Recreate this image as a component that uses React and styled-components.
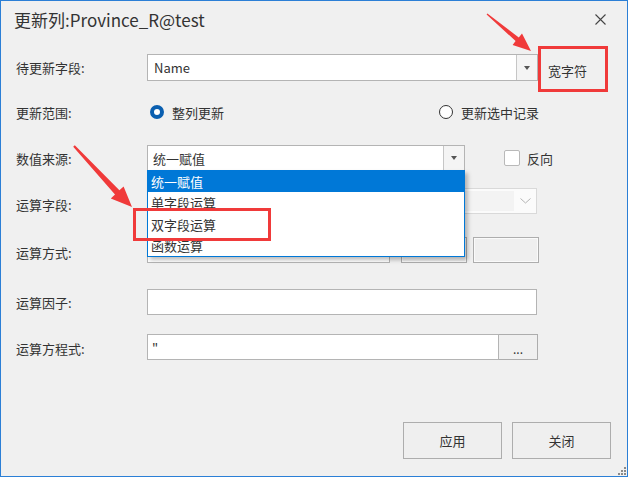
import styled, { createGlobalStyle } from "styled-components";

const GlobalStyle = createGlobalStyle`
	html, body {
		margin: 0;
		padding: 0;
		background: #f0f0f0;
	}
	* {
		box-sizing: border-box;
	}
`;

const Window = styled.div`
	position: relative;
	display: flex;
	flex-direction: column;
	width: 628px;
	height: 477px;
	background: #f0f0f0;
	border: 1px solid #2b7fd6;
	font-family: "Noto Sans CJK SC", "Noto Sans", sans-serif;
	font-size: 13px;
	color: #333;
	overflow: hidden;
`;

const TitleBar = styled.div`
	display: flex;
	align-items: center;
	justify-content: space-between;
	height: 36px;
	padding: 0 21px 0 13px;
`;

const Title = styled.div`
	font-size: 17px;
	color: #333;
`;

const Body = styled.div`
	display: flex;
	flex-direction: column;
	padding-left: 15px;
	flex: 1;
`;

const Row = styled.div`
	display: grid;
	grid-template-columns: 131px 1fr;
	align-items: center;
	height: ${(p) => p.$h}px;
	margin-top: ${(p) => p.$mt}px;
`;

const Label = styled.div`
	padding-top: ${(p) => p.$dy || 0}px;
	white-space: nowrap;
`;

const Controls = styled.div`
	display: flex;
	align-items: center;
	height: 100%;
`;

const Combo = styled.div`
	position: relative;
	display: flex;
	width: ${(p) => p.$w}px;
	height: 100%;
	background: #fff;
	border: 1px solid #b4b4b4;
`;

const ComboText = styled.div`
	flex: 1;
	display: flex;
	align-items: center;
	padding-left: ${(p) => p.$pl || 5}px;
	white-space: nowrap;
`;

const DropBtn = styled.div`
	display: flex;
	align-items: center;
	justify-content: center;
	width: 21px;
	border-left: 1px solid #c6c6c6;
	background: #f4f4f4;
`;

const Caret = styled.div`
	width: 0;
	height: 0;
	border-left: 3.5px solid transparent;
	border-right: 3.5px solid transparent;
	border-top: 4px solid #555;
`;

const DisabledCombo = styled.div`
	display: flex;
	width: ${(p) => p.$w}px;
	height: 100%;
	background: #fbfbfb;
	border: 1px solid #d9d9d9;
`;

const DisabledField = styled.div`
	flex: 1;
	margin: 2px 0 2px 2px;
	background: #f3f3f3;
`;

const ChevronBox = styled.div`
	display: flex;
	align-items: center;
	justify-content: center;
	width: 22px;
`;

const WideText = styled.div`
	margin-left: 10px;
	padding-top: 5px;
`;

const Option = styled.div`
	display: flex;
	align-items: center;
	width: ${(p) => (p.$w ? `${p.$w}px` : "auto")};
`;

const Radio = styled.span`
	display: inline-block;
	width: 14px;
	height: 14px;
	margin-left: 3px;
	margin-right: 8px;
	border-radius: 50%;
	background: #fff;
	border: ${(p) => (p.$on ? "4px solid #0a5fb0" : "1px solid #333")};
`;

const Check = styled.span`
	display: inline-block;
	width: 16px;
	height: 16px;
	margin-left: 39px;
	margin-right: 7px;
	border: 1px solid #b9b9b9;
	border-radius: 2px;
	background: #fff;
`;

const DropList = styled.div`
	position: absolute;
	top: 100%;
	left: -1px;
	right: -1px;
	height: 87px;
	background: #fff;
	border: 1px solid #0078d7;
	box-shadow: 3px 3px 4px rgba(0, 0, 0, 0.25);
	z-index: 2;
`;

const DropItem = styled.div`
	height: 21.3px;
	line-height: 21px;
	padding-left: 3px;
	background: ${(p) => (p.$active ? "#0078d7" : "transparent")};
	color: ${(p) => (p.$active ? "#fff" : "#333")};
`;

const Field = styled.div`
	display: flex;
	align-items: center;
	width: ${(p) => p.$w}px;
	height: 100%;
	padding-left: 4px;
	background: #fff;
	border: 1px solid #b4b4b4;
`;

const SideBox = styled.div`
	width: 66px;
	height: 100%;
	margin-left: ${(p) => p.$ml}px;
	border: 1px solid #adadad;
	box-shadow: inset 0 0 0 1px #fafafa;
	background: #efefef;
`;

const Ellipsis = styled.div`
	display: flex;
	align-items: flex-end;
	justify-content: center;
	width: 39px;
	height: 100%;
	padding-bottom: 4px;
	border: 1px solid #adadad;
	border-left: none;
	background: #f0f0f0;
	font-size: 12px;
	line-height: 1;
`;

const Footer = styled.div`
	display: flex;
	justify-content: flex-end;
	gap: 10px;
	padding: 0 16px 17px 0;
`;

const Button = styled.div`
	display: flex;
	align-items: center;
	justify-content: center;
	width: 99px;
	height: 37px;
	border: 1px solid #adadad;
	background: #efefef;
`;

const Overlay = styled.svg`
	position: absolute;
	left: -1px;
	top: -1px;
	pointer-events: none;
	z-index: 5;
`;

const Grip = styled.svg`
	position: absolute;
	right: 1px;
	bottom: 1px;
`;

const CloseIcon = () => (
	<svg width="11" height="11" viewBox="0 0 11 11">
		<path d="M0.5 0.5 L10.5 10.5 M10.5 0.5 L0.5 10.5" stroke="#444" strokeWidth="1.1" />
	</svg>
);

const Chevron = () => (
	<svg width="11" height="6" viewBox="0 0 11 6">
		<path d="M0.5 0.5 L5.5 5 L10.5 0.5" fill="none" stroke="#b5b5b5" strokeWidth="1" />
	</svg>
);

const items = ["统一赋值", "单字段运算", "双字段运算", "函数运算"];

const App = () => {
	return (
		<>
			<GlobalStyle />
			<Window>
				<TitleBar>
					<Title>更新列:Province_R@test</Title>
					<CloseIcon />
				</TitleBar>

				<Body>
					<Row $mt={17} $h={27}>
						<Label>待更新字段:</Label>
						<Controls>
							<Combo $w={391}>
								<ComboText $pl={6}>Name</ComboText>
								<DropBtn>
									<Caret />
								</DropBtn>
							</Combo>
							<WideText>宽字符</WideText>
						</Controls>
					</Row>

					<Row $mt={20} $h={22}>
						<Label>更新范围:</Label>
						<Controls>
							<Option $w={289}>
								<Radio $on />
								整列更新
							</Option>
							<Option>
								<Radio />
								更新选中记录
							</Option>
						</Controls>
					</Row>

					<Row $mt={22} $h={26}>
						<Label>数值来源:</Label>
						<Controls>
							<Combo $w={318}>
								<ComboText>统一赋值</ComboText>
								<DropBtn>
									<Caret />
								</DropBtn>
								<DropList>
									{items.map((t, i) => (
										<DropItem key={t} $active={i === 0}>
											{t}
										</DropItem>
									))}
								</DropList>
							</Combo>
							<Check />
							反向
						</Controls>
					</Row>

					<Row $mt={17} $h={26}>
						<Label $dy={7}>运算字段:</Label>
						<Controls>
							<DisabledCombo $w={390}>
								<DisabledField />
								<ChevronBox>
									<Chevron />
								</ChevronBox>
							</DisabledCombo>
						</Controls>
					</Row>

					<Row $mt={23} $h={26}>
						<Label $dy={5}>运算方式:</Label>
						<Controls>
							<Field $w={243} />
							<SideBox $ml={11} />
							<SideBox $ml={6} />
						</Controls>
					</Row>

					<Row $mt={26} $h={26}>
						<Label>运算因子:</Label>
						<Controls>
							<Field $w={390} />
						</Controls>
					</Row>

					<Row $mt={19} $h={26}>
						<Label $dy={3}>运算方程式:</Label>
						<Controls>
							<Field $w={352}>"</Field>
							<Ellipsis>...</Ellipsis>
						</Controls>
					</Row>
				</Body>

				<Footer>
					<Button>应用</Button>
					<Button>关闭</Button>
				</Footer>

				<Grip width="9" height="9" viewBox="0 0 9 9">
					{[
						[7, 1],
						[4, 4],
						[7, 4],
						[1, 7],
						[4, 7],
						[7, 7],
					].map(([x, y]) => (
						<rect key={`${x}-${y}`} x={x} y={y} width="2" height="2" fill="#8a8a8a" />
					))}
				</Grip>

				<Overlay width="628" height="477" viewBox="0 0 628 477">
					<rect x="539.5" y="47.5" width="67" height="43" fill="none" stroke="#f03a3a" strokeWidth="3" />
					<rect x="134.5" y="209.5" width="135" height="30" fill="none" stroke="#f03a3a" strokeWidth="3" />
					<polygon
						points="486.6,14.6 487.4,13.4 518.8,37.6 522,33.6 531,51 512.6,45 515.6,41"
						fill="#f03a3a"
					/>
					<polygon
						points="73.2,146.8 74.8,145.2 119.4,190.2 123.6,186.4 132,207 110.8,198.4 115,194.4"
						fill="#f03a3a"
					/>
				</Overlay>
			</Window>
		</>
	);
};

export default App;
